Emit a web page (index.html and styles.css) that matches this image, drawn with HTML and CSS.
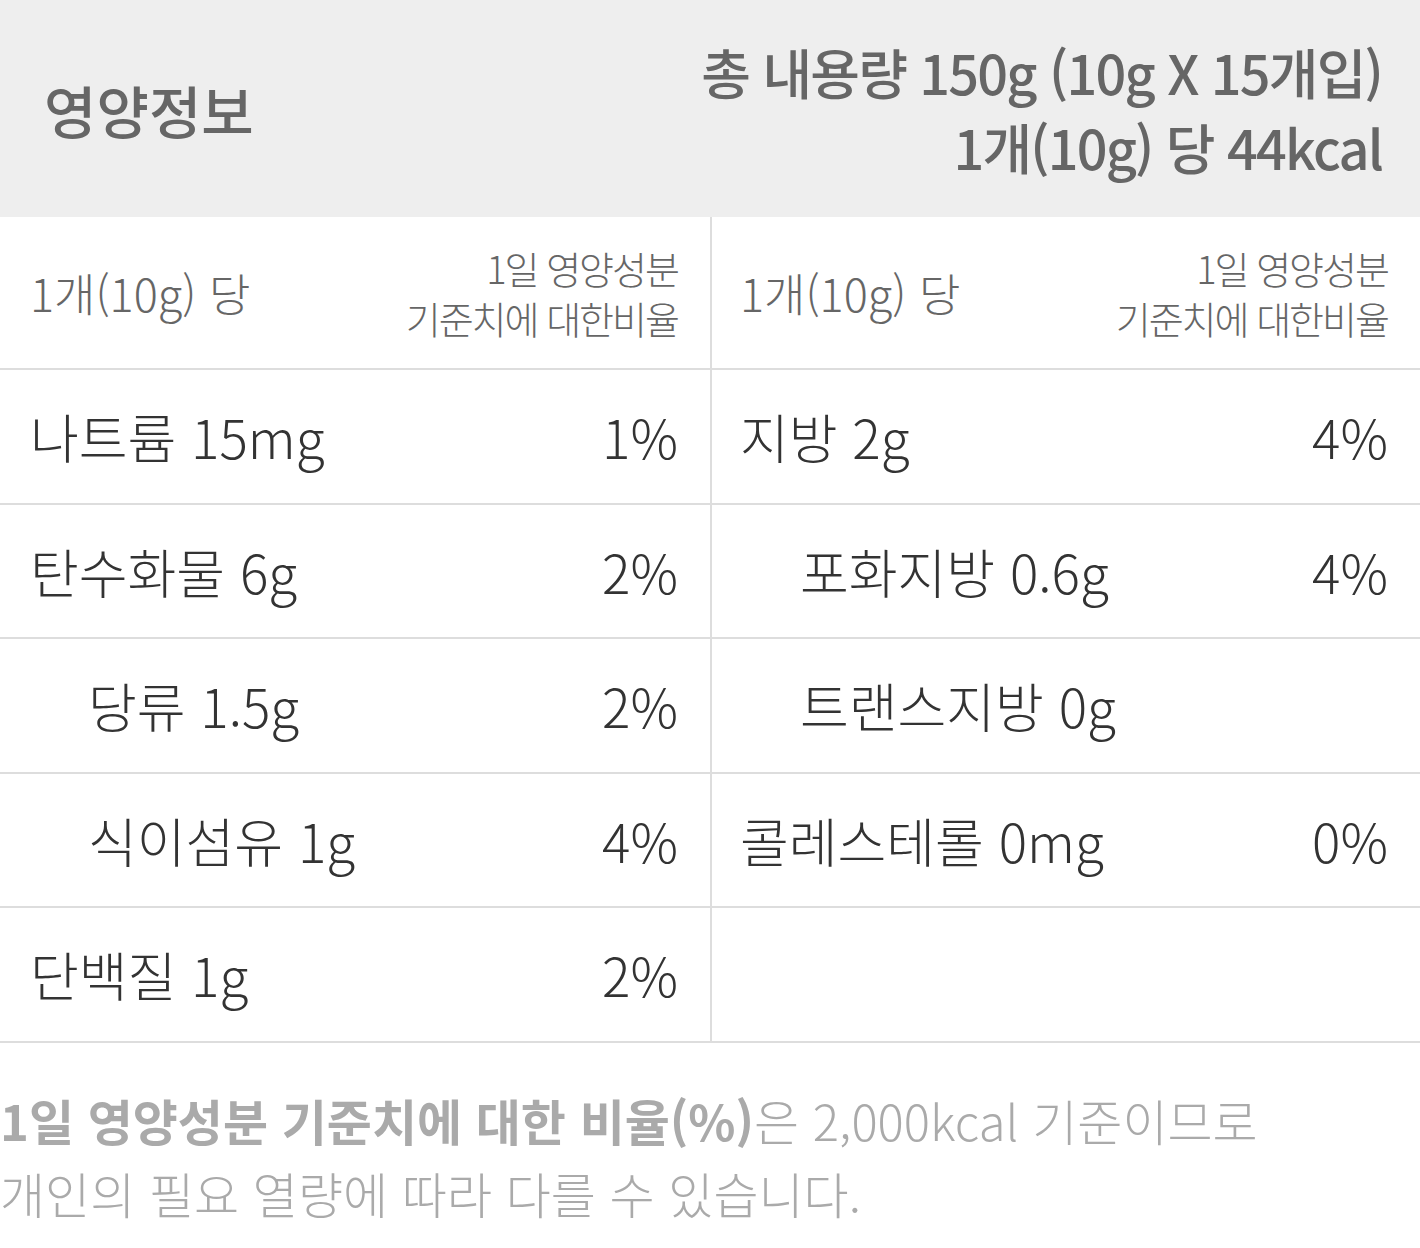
FILE: index.html
```html
<!DOCTYPE html>
<html lang="ko">
<head>
<meta charset="utf-8">
<link rel="stylesheet" href="styles.css">
</head>
<body>
<div class="page">
  <header class="top">
    <h1 class="title">영양정보</h1>
    <div class="summary">
      <div>총 내용량 150g (10g X 15개입)</div>
      <div>1개(10g) 당 44kcal</div>
    </div>
  </header>
  <div class="table">
    <div class="col">
      <div class="row head">
        <span class="per">1개(10g) 당</span>
        <span class="ratio">1일 영양성분<br>기준치에 대한비율</span>
      </div>
      <div class="row"><span class="name">나트륨 15mg</span><span class="pct">1%</span></div>
      <div class="row"><span class="name">탄수화물 6g</span><span class="pct">2%</span></div>
      <div class="row sub"><span class="name">당류 1.5g</span><span class="pct">2%</span></div>
      <div class="row sub"><span class="name">식이섬유 1g</span><span class="pct">4%</span></div>
      <div class="row"><span class="name">단백질 1g</span><span class="pct">2%</span></div>
    </div>
    <div class="col">
      <div class="row head">
        <span class="per">1개(10g) 당</span>
        <span class="ratio">1일 영양성분<br>기준치에 대한비율</span>
      </div>
      <div class="row"><span class="name">지방 2g</span><span class="pct">4%</span></div>
      <div class="row sub"><span class="name">포화지방 0.6g</span><span class="pct">4%</span></div>
      <div class="row sub"><span class="name">트랜스지방 0g</span><span class="pct"></span></div>
      <div class="row"><span class="name">콜레스테롤 0mg</span><span class="pct">0%</span></div>
      <div class="row"><span class="name"></span><span class="pct"></span></div>
    </div>
  </div>
  <p class="note"><strong>1일 영양성분 기준치에 대한 비율(%)</strong>은 2,000kcal 기준이므로<br>개인의 필요 열량에 따라 다를 수 있습니다.</p>
</div>
</body>
</html>
```
FILE: styles.css
```css
html, body {
  margin: 0;
  padding: 0;
  background: #fff;
}
body {
  font-family: "Noto Sans CJK KR", "Noto Sans", sans-serif;
  color: #333;
}
.page {
  width: 1420px;
}
.top {
  background: #eeeeee;
  height: 217px;
  display: flex;
  align-items: center;
  justify-content: space-between;
  padding: 0 38px 0 44px;
  box-sizing: border-box;
  color: #666;
}
.title {
  margin: 0;
  font-size: 57px;
  font-weight: 500;
  letter-spacing: 0;
}
.summary {
  text-align: right;
  font-size: 54px;
  font-weight: 500;
  line-height: 75px;
  letter-spacing: -1.8px;
}
.table {
  display: flex;
  border-bottom: 2px solid #dddddd;
}
.col {
  width: 710px;
  box-sizing: border-box;
}
.col + .col {
  border-left: 2px solid #dddddd;
}
.row {
  height: 134.5px;
  display: flex;
  align-items: center;
  justify-content: space-between;
  padding: 0 32px 0 30px;
  box-sizing: border-box;
  border-top: 2px solid #dddddd;
  font-size: 53px;
  font-weight: 300;
  letter-spacing: 0;
}
.col + .col .row {
  padding-left: 28px;
}
.row.head {
  height: 151px;
  border-top: none;
  color: #666;
}
.col .row.sub {
  padding-left: 88px;
}
.per {
  font-size: 45px;
}
.ratio {
  text-align: right;
  font-size: 38px;
  line-height: 50px;
  letter-spacing: -2px;
}
.note {
  margin: 40px 0 0 0;
  font-size: 49px;
  line-height: 73px;
  color: #aaa;
  font-weight: 300;
  letter-spacing: 0;
}
.note strong {
  font-weight: 700;
}
```
